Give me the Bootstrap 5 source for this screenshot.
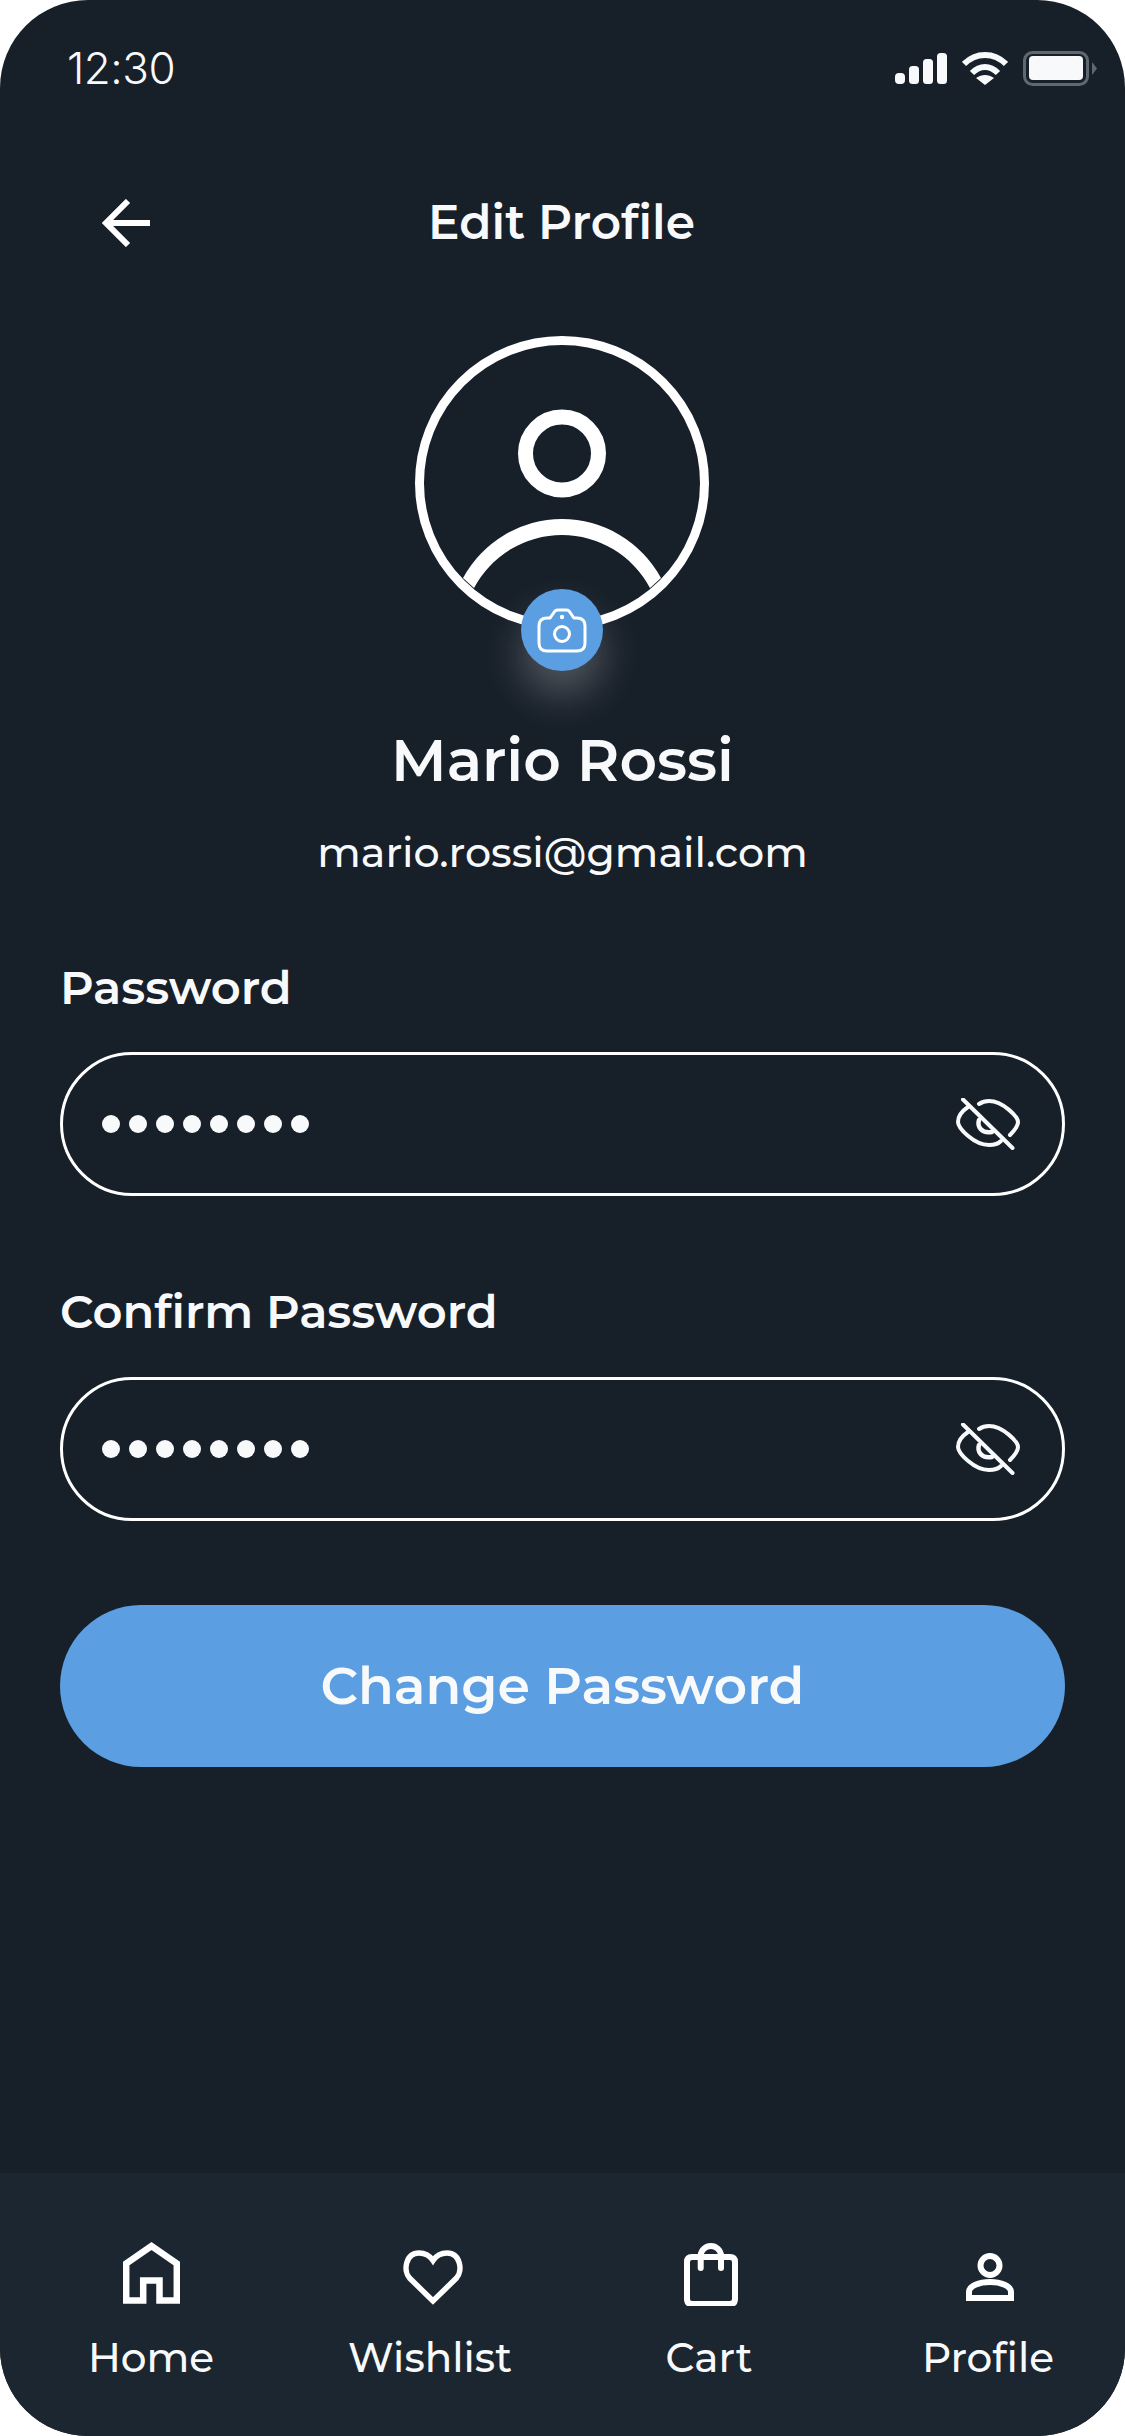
<!DOCTYPE html>
<html lang="en">
<head>
  <meta charset="UTF-8" />
  <title>Edit Profile</title>
  <link href="https://cdn.jsdelivr.net/npm/bootstrap@5.3.3/dist/css/bootstrap.min.css" rel="stylesheet" />
  <style>
    html, body { height: 100%; margin: 0; background: #fff; }
    .phone {
      width: 1125px; height: 2436px; background: #171f29; border-radius: 88px;
      overflow: hidden; color: #f8f9fb; font-family: Montserrat, "Open Sans", "Noto Sans", sans-serif;
    }
    .status-bar { height: 136px; padding: 0 28px 0 67px; }
    .status-time { font-family: Inter, sans-serif; font-size: 44px; font-weight: 300; line-height: 1; padding-top: 46px; letter-spacing: -.5px; }
    .status-icons { padding-top: 51px; gap: 15px; }
    .top-bar { height: 173px; padding-left: 102px; position: relative; }
    .top-title { font-size: 47px; font-weight: 600; line-height: 1; position: absolute; left: 0; right: 2px; text-align: center; }
    .avatar-wrap { width: 296px; height: 300px; position: relative; margin-top: 27px; }
    .cam-btn {
      position: absolute; left: 106px; top: 253px; width: 82px; height: 82px; border-radius: 50%;
      background: #5b9ee1; box-shadow: 0 24px 40px rgba(255,255,255,.25);
    }
    .user-name { font-size: 58.3px; font-weight: 600; line-height: 1; margin-top: 96px; }
    .user-mail { font-size: 41.2px; font-weight: 500; line-height: 1; margin-top: 42px; }
    .form-zone { padding: 0 60px; margin-top: 91px; }
    .field-wrap + .field-wrap { margin-top: 93px; }
    .field-label { font-size: 46.5px; font-weight: 600; line-height: 1; display: block; margin-bottom: 41px; }
    .pw-box { height: 144px; border: 3px solid #fff; border-radius: 72px; padding: 0 42px 0 39px; }
    .pw-dots { gap: 9px; }
    .pw-dot { width: 18px; height: 18px; border-radius: 50%; background: #f8f9fb; display: block; }
    .change-btn {
      height: 162px; border-radius: 81px; background: #5b9ee1; border: 0; color: #f8f9fb;
      font-size: 52.2px; font-weight: 600; margin-top: 84px;
    }
    .change-btn:hover { background: #5b9ee1; color: #f8f9fb; }
    .tab-bar { height: 263px; background: #1b2630; padding: 65px 37px 0 51px; }
    .tab-item { color: #f8f9fb; text-decoration: none; width: 200px; font-size: 40.5px; font-weight: 500; line-height: 1; }
    .tab-icon { height: 68px; margin-bottom: 32px; }
  </style>
</head>
<body>
  <div class="phone d-flex flex-column">
    <div class="status-bar d-flex justify-content-between">
      <div class="status-time">12:30</div>
      <div class="status-icons d-flex align-items-start">
        <svg width="52" height="33" viewBox="0 0 52 33" fill="#f8f9fb"><rect x="0" y="22" width="10" height="11" rx="4"/><rect x="14" y="15" width="10" height="18" rx="3.5"/><rect x="28" y="8" width="10" height="25" rx="3.5"/><rect x="42" y="2" width="10" height="31" rx="3.5"/></svg>
        <svg width="46" height="35" viewBox="0 0 46 35" fill="none" stroke="#f8f9fb" stroke-width="6"><path d="M2 13 C14 1 32 1 44 13"/><path d="M10 22 C18 14 28 14 36 22"/><path d="M23 34 L14 27 C20 23 26 23 32 27Z" fill="#f8f9fb" stroke="none"/></svg>
        <svg width="74" height="35" viewBox="0 0 74 35"><rect x="1.5" y="1.5" width="63" height="32" rx="8" fill="none" stroke="#5f6871" stroke-width="3"/><rect x="6" y="5" width="54" height="24" rx="4" fill="#f8f9fb"/><path d="M69 11 L74 17.500 L69 24Z" fill="#5f6871"/></svg>
      </div>
    </div>

    <div class="top-bar d-flex align-items-center">
      <div class="top-title">Edit Profile</div>
      <svg width="48" height="48" viewBox="0 0 48 48" fill="none" stroke="#fff" stroke-width="6"><path d="M26 2 L4 24 L26 46"/><path d="M4 24 H48"/></svg>
    </div>

    <div class="d-flex flex-column align-items-center">
      <div class="avatar-wrap">
        <svg width="296" height="296" viewBox="0 0 296 296" fill="none" stroke="#fff">
          <circle cx="147" cy="147" r="142.500" stroke-width="9"/>
          <circle cx="147" cy="117.500" r="36.500" stroke-width="15"/>
          <path d="M48 242 A112.600 112.600 0 0 1 246 242 L235 252 A99.600 99.600 0 0 0 59 252Z" fill="#fff" stroke="none"/>
        </svg>
        <div class="cam-btn d-flex align-items-center justify-content-center">
          <svg width="50" height="45" viewBox="0 0 50 45" fill="none" stroke="#fff" stroke-width="3"><path d="M10 10 H13 L18 3 Q19.500 2 21 2 H29 Q31 2 32 3 L37 10 H40 Q48 10 48 18 V35 Q48 43 40 43 H10 Q2 43 2 35 V18 Q2 10 10 10Z"/><circle cx="25" cy="26" r="7.500"/><circle cx="25" cy="9" r="2.200" fill="#fff" stroke="none"/></svg>
        </div>
      </div>
      <div class="user-name">Mario Rossi</div>
      <div class="user-mail">mario.rossi@gmail.com</div>
    </div>

    <form class="form-zone d-flex flex-column">
      <div class="field-wrap">
        <label class="field-label">Password</label>
        <div class="pw-box d-flex align-items-center justify-content-between">
          <span class="pw-dots d-flex"><i class="pw-dot"></i><i class="pw-dot"></i><i class="pw-dot"></i><i class="pw-dot"></i><i class="pw-dot"></i><i class="pw-dot"></i><i class="pw-dot"></i><i class="pw-dot"></i></span>
          <svg width="64" height="52" viewBox="0 0 64 52" fill="none" stroke="#f8f9fb" stroke-width="4" stroke-linecap="round"><path d="M7 1.500 L56.500 50"/><path d="M12 9 C6 13 2 19 2 24 C2 30 18 47 33 47 C37 47 42 46 45 43"/><path d="M23 6 C26 4 29 3 33 3 C47 3 62 19 62 24 C62 28 58 33 54 37"/><path d="M23 22 C21 28 25 36 36 34" stroke-width="4.500"/></svg>
        </div>
      </div>
      <div class="field-wrap">
        <label class="field-label">Confirm Password</label>
        <div class="pw-box d-flex align-items-center justify-content-between">
          <span class="pw-dots d-flex"><i class="pw-dot"></i><i class="pw-dot"></i><i class="pw-dot"></i><i class="pw-dot"></i><i class="pw-dot"></i><i class="pw-dot"></i><i class="pw-dot"></i><i class="pw-dot"></i></span>
          <svg width="64" height="52" viewBox="0 0 64 52" fill="none" stroke="#f8f9fb" stroke-width="4" stroke-linecap="round"><path d="M7 1.500 L56.500 50"/><path d="M12 9 C6 13 2 19 2 24 C2 30 18 47 33 47 C37 47 42 46 45 43"/><path d="M23 6 C26 4 29 3 33 3 C47 3 62 19 62 24 C62 28 58 33 54 37"/><path d="M23 22 C21 28 25 36 36 34" stroke-width="4.500"/></svg>
        </div>
      </div>
      <button type="button" class="btn change-btn w-100">Change Password</button>
    </form>

    <nav class="tab-bar d-flex justify-content-between mt-auto">
      <a class="tab-item d-flex flex-column align-items-center" href="#">
        <svg class="tab-icon" width="57" height="68" viewBox="0 0 57 68" fill="none" stroke="#fff" stroke-width="6.500"><path d="M3.200 62.500 V25.500 L28.500 8 L53.800 25.500 V62.500 H36.500 V42.500 H20.200 V62.500Z"/></svg>Home</a>
      <a class="tab-item d-flex flex-column align-items-center" href="#">
        <svg class="tab-icon" width="66" height="68" viewBox="-6 -12 66 68" fill="none" stroke="#fff" stroke-width="5.500"><path d="M30 51 L6.500 28 C0 21 2.500 3 16 3 C22 3 27 6 30 10.500 C33 6 38 3 44 3 C57.500 3 60 21 53.500 28Z"/></svg>Wishlist</a>
      <a class="tab-item d-flex flex-column align-items-center" href="#">
        <svg class="tab-icon" width="58" height="68" viewBox="-4 -4 58 68" fill="none" stroke="#fff" stroke-width="6" stroke-linecap="round"><path d="M8 15 H46 Q51 15 51 20 V57 Q51 62 46 62 H8 Q3 62 3 57 V20 Q3 15 8 15Z"/><path d="M16.700 26 V13.200 A10.200 10.200 0 0 1 37 13.200 V26"/></svg>Cart</a>
      <a class="tab-item d-flex flex-column align-items-center" href="#">
        <svg class="tab-icon" width="52" height="68" viewBox="-4 -15 52 68" fill="none" stroke="#fff" stroke-width="6"><circle cx="24" cy="12.500" r="9.500"/><path d="M3 45 V39 C3 33 13 29 24 29 C35 29 45 33 45 39 V45Z"/></svg>Profile</a>
    </nav>
  </div>
  <script src="https://cdn.jsdelivr.net/npm/bootstrap@5.3.3/dist/js/bootstrap.bundle.min.js"></script>
</body>
</html>
